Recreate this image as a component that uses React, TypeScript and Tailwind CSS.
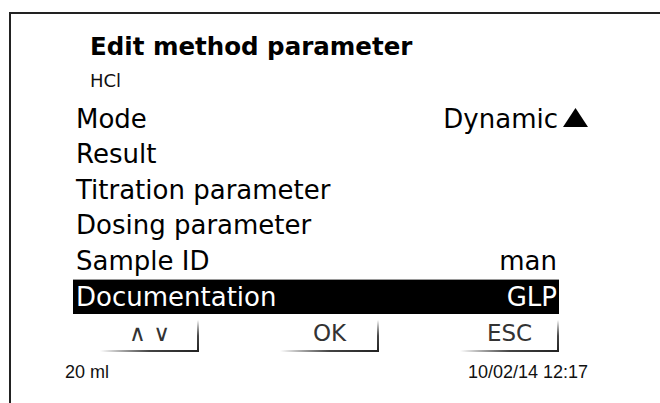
const rows = [
	{ label: "Mode", value: "Dynamic", arrow: true },
	{ label: "Result", value: "" },
	{ label: "Titration parameter", value: "" },
	{ label: "Dosing parameter", value: "" },
	{ label: "Sample ID", value: "man" },
];

function SoftKey({ label }: { label: string }) {
	return (
		<div className="relative flex h-[34px] w-[99px] items-end justify-center pb-[6px] text-[23px] leading-[26px] text-[#333]">
			<span>{label}</span>
			<div className="absolute right-0 top-[2px] h-[32px] w-[2px] bg-gradient-to-b from-white via-[#444] to-[#222]" />
			<div className="absolute bottom-0 left-0 h-[2px] w-full bg-gradient-to-r from-white via-[#444] to-[#222]" />
		</div>
	);
}

export default function App() {
	return (
		<div
			className="flex h-[403px] w-[660px] flex-col bg-white pl-[9px] pt-[12px] text-black"
			style={{ fontFamily: '"DejaVu Sans", Verdana, sans-serif' }}
		>
			<div className="flex flex-1 flex-col border-l-2 border-t-2 border-[#222]">
				<h1 className="ml-[79px] mt-[17.5px] text-[24.5px] font-bold leading-[30px]">Edit method parameter</h1>
				<div className="ml-[79px] mt-[9px] text-[18px] leading-[20px] text-[#111]">HCl</div>

				<div className="ml-[62px] mt-[11px] flex w-[486px] flex-col text-[26px]">
					{rows.map((r) => (
						<div key={r.label} className="flex h-[35.5px] items-center justify-between pl-[3px] pr-[2px] leading-[35px]">
							<span>{r.label}</span>
							{r.arrow ? (
								<span className="-mr-[31px] flex items-center gap-[5px]">
									{r.value}
									<svg width="25" height="20" viewBox="0 0 25 20" className="mb-[3px]">
										<polygon points="12.5,0 25,19 0,19" fill="#000" />
									</svg>
								</span>
							) : (
								<span>{r.value}</span>
							)}
						</div>
					))}
					<div className="border-t border-[#9a9a9a]">
						<div className="flex h-[34px] items-center justify-between bg-black pl-[3px] pr-[2px] leading-[34px] text-white">
							<span>Documentation</span>
							<span>GLP</span>
						</div>
					</div>
				</div>

				<div className="ml-[89px] mt-[4px] flex gap-[81px]">
					<SoftKey label="∧ ∨" />
					<SoftKey label="OK" />
					<SoftKey label="ESC" />
				</div>

				<div
					className="ml-[54px] mt-[9.5px] flex w-[523px] justify-between text-[18px] leading-[20px] text-[#111]"
					style={{ fontFamily: '"Liberation Sans", Arial, sans-serif' }}
				>
					<span>20 ml</span>
					<span>10/02/14 12:17</span>
				</div>
			</div>
		</div>
	);
}
